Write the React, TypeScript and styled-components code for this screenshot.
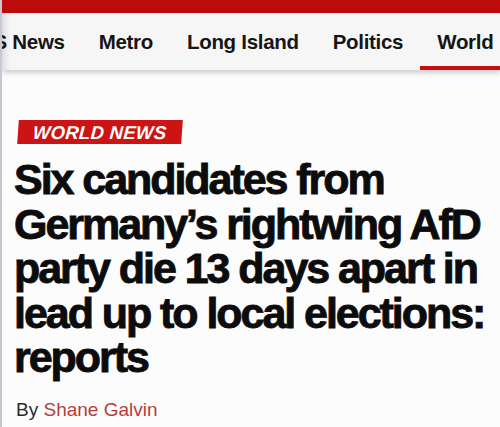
import styled, { createGlobalStyle } from "styled-components";

const GlobalStyle = createGlobalStyle`
  html, body {
    margin: 0;
    padding: 0;
    background: #fcfcfc;
  }
  body {
    font-family: "Liberation Sans", Arial, sans-serif;
  }
`;

const Page = styled.div`
  width: 500px;
  height: 427px;
  overflow: hidden;
  border-left: 2px solid #c9c7d6;
  box-sizing: border-box;
  background: #fcfcfc;
`;

const TopBar = styled.div`
  height: 13px;
  background: #bd0a0a;
`;

const Nav = styled.nav`
  height: 57px;
  background: #f6f6f6;
  box-shadow: 0 3px 5px rgba(0, 0, 0, 0.18), inset 8px 0 8px -6px rgba(0, 0, 0, 0.15);
  overflow: hidden;
  position: relative;
`;

const NavTrack = styled.ul`
  display: flex;
  margin: 0 0 0 -40px;
  padding: 0;
  list-style: none;
  height: 100%;
  white-space: nowrap;
`;

const NavItem = styled.li<{ $active?: boolean }>`
  display: flex;
  align-items: center;
  padding: 4px 17px 0;
  font-size: 20.5px;
  font-weight: 700;
  color: #151515;
  letter-spacing: -0.3px;
  border-bottom: 4px solid ${(p) => (p.$active ? "#c40f12" : "transparent")};
  box-sizing: border-box;
`;

const Article = styled.article`
  padding: 50px 0 0 12px;
`;

const Badge = styled.span`
  display: inline-block;
  background: #cd1414;
  color: #fff;
  font-style: italic;
  font-weight: 700;
  font-size: 18.5px;
  letter-spacing: 0.3px;
  padding: 2.5px 15px;
  margin-left: 4px;
  transform: skewX(-4deg);
  line-height: 19px;
`;

const Headline = styled.h1`
  margin: 13px 0 0 0;
  max-width: 486px;
  font-size: 43px;
  line-height: 44.5px;
  font-weight: 700;
  letter-spacing: -2.05px;
  color: #0c0c0c;
  -webkit-text-stroke: 0.9px #0c0c0c;
`;

const Byline = styled.p`
  margin: 19px 0 0 2px;
  font-size: 19px;
  line-height: 22px;
  color: #2a2a2a;
`;

const Author = styled.span`
  color: #b43c3c;
`;

const items = ["US News", "Metro", "Long Island", "Politics", "World"];

export default function App() {
  return (
    <Page>
      <GlobalStyle />
      <TopBar />
      <Nav>
        <NavTrack>
          {items.map((item) => (
            <NavItem key={item} $active={item === "World"}>
              {item}
            </NavItem>
          ))}
        </NavTrack>
      </Nav>
      <Article>
        <Badge>WORLD NEWS</Badge>
        <Headline>
          Six candidates from Germany’s rightwing AfD party die 13 days apart in
          lead up to local elections: reports
        </Headline>
        <Byline>
          By <Author>Shane Galvin</Author>
        </Byline>
      </Article>
    </Page>
  );
}
